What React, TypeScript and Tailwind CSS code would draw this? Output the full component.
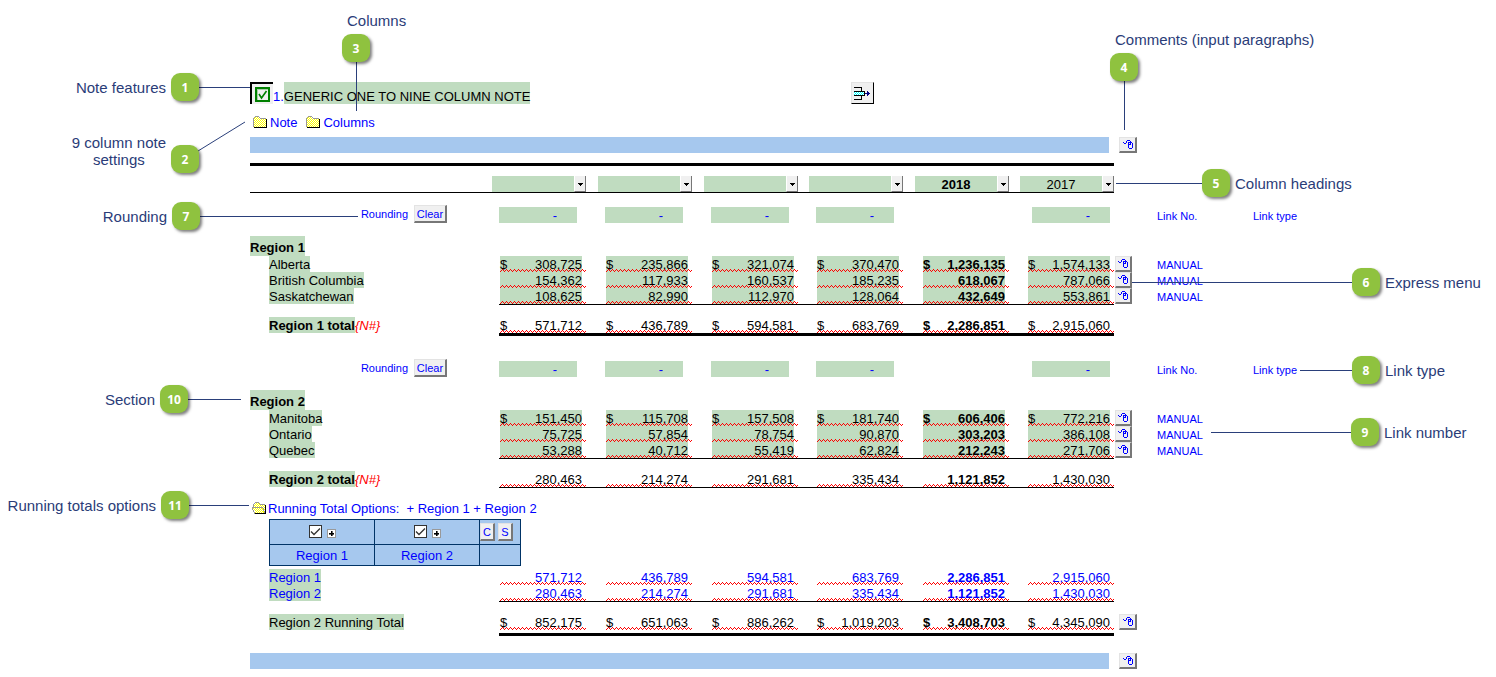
import type { ReactNode } from 'react';

type Amount = { dollar?: boolean; values: string[] };
type Line = { name: string; amounts: Amount };

const COLS = ['w-[106px]', 'w-[106px]', 'w-[105px]', 'w-[106px]', 'w-[105px]', 'w-[87px]'];
const HEADINGS = ['', '', '', '', '2018', '2017'];

const region1: Line[] = [
  { name: 'Alberta', amounts: { dollar: true, values: ['308,725', '235,866', '321,074', '370,470', '1,236,135', '1,574,133'] } },
  { name: 'British Columbia', amounts: { values: ['154,362', '117,933', '160,537', '185,235', '618,067', '787,066'] } },
  { name: 'Saskatchewan', amounts: { values: ['108,625', '82,990', '112,970', '128,064', '432,649', '553,861'] } },
];
const region2: Line[] = [
  { name: 'Manitoba', amounts: { dollar: true, values: ['151,450', '115,708', '157,508', '181,740', '606,406', '772,216'] } },
  { name: 'Ontario', amounts: { values: ['75,725', '57,854', '78,754', '90,870', '303,203', '386,108'] } },
  { name: 'Quebec', amounts: { values: ['53,288', '40,712', '55,419', '62,824', '212,243', '271,706'] } },
];
const total1 = ['571,712', '436,789', '594,581', '683,769', '2,286,851', '2,915,060'];
const total2 = ['280,463', '214,274', '291,681', '335,434', '1,121,852', '1,430,030'];
const running = ['852,175', '651,063', '886,262', '1,019,203', '3,408,703', '4,345,090'];

function Patterns() {
  return (
    <svg className="absolute size-0" aria-hidden="true">
      <defs>
        <pattern id="squiggle" width="4" height="3" patternUnits="userSpaceOnUse">
          <path d="M0 2h1v1H0zM1 1h1v1H1zM2 0h1v1H2zM3 1h1v1H3z" fill="#f00" />
        </pattern>
        <pattern id="dither" width="2" height="2" patternUnits="userSpaceOnUse">
          <path d="M0 0h2v2H0z" fill="#fff" />
          <path d="M1 0h1v1H1zM0 1h1v1H0z" fill="#ff0" />
        </pattern>
        <pattern id="cyan" width="2" height="2" patternUnits="userSpaceOnUse">
          <path d="M0 0h2v2H0z" fill="#fff" />
          <path d="M1 0h1v1H1zM0 1h1v1H0z" fill="#0ff" />
        </pattern>
      </defs>
    </svg>
  );
}

function Folder() {
  return (
    <svg width="15" height="13" viewBox="0 0 15 13" shapeRendering="crispEdges" aria-hidden="true">
      <path d="M1 2h1V1h5v1h1v1h5v8H1z" fill="url(#dither)" />
      <path d="M0 2h1v9H0zM1 1h1v1H1zM2 0h4v1H2zM6 1h1v1H6zM7 2h6v1H7z" fill="#999" />
      <path d="M1 11h12V3h1v9H1z" fill="#000" />
    </svg>
  );
}

function OpenFolder() {
  return (
    <svg width="15" height="13" viewBox="0 0 15 13" shapeRendering="crispEdges" aria-hidden="true">
      <path d="M2 2h1V1h4v1h1v1h5v8H4z" fill="url(#dither)" />
      <path d="M0 5h11v1h1v3h1v3H3V9H2V7H0z" fill="url(#dither)" />
      <path d="M10 6h1v2h1v2h-1V8h-1z" fill="#ff0" />
      <path d="M1 2h1v3H1zM2 1h1v1H2zM3 0h4v1H3zM7 1h1v1H7zM8 2h5v1H8zM0 5h11v1H0zM0 6h1v2H0zM1 8h1v2H1zM2 10h1v2H2zM11 6h1v3h-1zM12 9h1v2h-1z" fill="#999" />
      <path d="M3 11h10V3h1v9H3z" fill="#000" />
    </svg>
  );
}

function MouseIcon() {
  return (
    <svg width="10" height="9" viewBox="0 0 10 9" shapeRendering="crispEdges" aria-hidden="true">
      <path
        d="M4 0h3v1H4zM3 1h1v1H3zM7 1h1v1H7zM0 2h1v1H0zM3 2h1v1H3zM5 2h4v1H5zM1 3h2v1H1zM5 3h1v5H5zM7 3h1v2H7zM9 3h1v5H9zM6 4h1v1H6zM6 8h3v1H6z"
        fill="#00f"
      />
    </svg>
  );
}

function MouseButton({ label, width = 'w-[17px]' }: { label: string; width?: string }) {
  return (
    <button
      type="button"
      aria-label={label}
      className={`flex h-4 items-center justify-center border-t border-l border-r-2 border-b-2 border-t-[#e3e3e3] border-l-[#e3e3e3] border-r-[#777] border-b-[#777] bg-[#f0f0f0] ${width}`}
    >
      <MouseIcon />
    </button>
  );
}

function SmallButton({ children, className }: { children: ReactNode; className: string }) {
  return (
    <button
      type="button"
      className={`flex h-[18px] items-center justify-center border-t border-l border-r-2 border-b-2 border-t-[#e3e3e3] border-l-[#e3e3e3] border-r-[#777] border-b-[#777] bg-[#f0f0f0] text-[11px] leading-4 text-[#00f] ${className}`}
    >
      {children}
    </button>
  );
}

function Bar() {
  return (
    <div className="flex gap-[10px]">
      <div className="h-4 w-[859px] bg-[#a6c8ee]" />
      <MouseButton label="Comment menu" width="w-[18px]" />
    </div>
  );
}

function Field({ value, green, dollar }: { value: string; green?: boolean; dollar?: boolean }) {
  return (
    <div className="relative ml-px h-4 w-[86px]">
      <div className={`flex h-4 w-[82px] justify-between ${green ? 'bg-[#c0dcc0]' : ''}`}>
        <span>{dollar ? '$' : ''}</span>
        <span>{value}</span>
      </div>
      <svg className="absolute bottom-0 left-0 h-[3px] w-full" shapeRendering="crispEdges" aria-hidden="true">
        <rect width="100%" height="100%" fill="url(#squiggle)" />
      </svg>
    </div>
  );
}

function AmountCells({ amounts, green, rule = '' }: { amounts: Amount; green?: boolean; rule?: string }) {
  return (
    <>
      {amounts.values.map((v, i) => (
        <td key={i} className={`border-black p-0 ${rule} ${i === 4 ? 'font-bold' : ''}`}>
          <Field value={v} green={green} dollar={amounts.dollar} />
        </td>
      ))}
    </>
  );
}

function Columns() {
  return (
    <colgroup>
      <col className="w-[249px]" />
      {COLS.map((c, i) => (
        <col key={i} className={c} />
      ))}
      <col className="w-[43px]" />
      <col className="w-[96px]" />
    </colgroup>
  );
}

const tableClass = 'w-[1003px] table-fixed border-separate border-spacing-0 text-[13px] leading-[18px]';

function RoundingRow() {
  return (
    <div className="flex h-[18px] items-end text-[11px] leading-[14px] text-[#00f]">
      <div className="flex w-[249px] items-center justify-end gap-[6px] pr-[52px]">
        <span>Rounding</span>
        <SmallButton className="w-[33px]">Clear</SmallButton>
      </div>
      {COLS.map((c, i) => (
        <div key={i} className={`${c} ${i === 5 ? 'pl-[5px]' : ''}`}>
          {i !== 4 && (
            <input
              aria-label={`Rounding column ${i + 1}`}
              defaultValue="-"
              className="block h-4 w-[78px] bg-[#c0dcc0] pt-px pr-5 text-right text-[13px] leading-4 text-[#00f] outline-none"
            />
          )}
        </div>
      ))}
      <span className="ml-[43px] w-[96px]">Link No.</span>
      <span>Link type</span>
    </div>
  );
}

type RegionProps = { name: string; lines: Line[]; total: string[]; dollar?: boolean; totalRule: string };

function Region({ name, lines, total, dollar, totalRule }: RegionProps) {
  return (
    <table className={tableClass}>
      <Columns />
      <tbody>
        <tr>
          <th className="p-0 text-left align-top" colSpan={9}>
            <span className="block h-5 w-fit bg-[#c0dcc0] pt-[3px]">{name}</span>
          </th>
        </tr>
        {lines.map((l, i) => (
          <tr key={l.name}>
            <td className="p-0 pl-[19px] align-top">
              <span className="block h-4 w-fit bg-[#c0dcc0]">{l.name}</span>
            </td>
            <AmountCells amounts={l.amounts} green rule={i === lines.length - 1 ? 'border-b' : ''} />
            <td className="p-0 pl-px align-top">
              <MouseButton label={`${l.name} menu`} />
            </td>
            <td className="p-0 align-top text-[11px] text-[#00f]">
              <span className="block h-4">MANUAL</span>
            </td>
          </tr>
        ))}
        <tr>
          <td className="h-3 p-0" colSpan={9} />
        </tr>
        <tr>
          <td className="p-0 pl-[19px] align-top">
            <div className="flex h-4">
              <span className="bg-[#c0dcc0] font-bold">{name} total</span>
              <span className="text-[#f00] italic">{'{N#}'}</span>
            </div>
          </td>
          <AmountCells amounts={{ dollar, values: total }} rule={totalRule} />
        </tr>
      </tbody>
    </table>
  );
}

function OptionCheck({ name }: { name: string }) {
  return (
    <div className="flex items-end justify-center gap-[5px]">
      <span className="relative size-[13px]">
        <input
          type="checkbox"
          defaultChecked
          aria-label={`Include ${name}`}
          className="block size-[13px] appearance-none border border-[#333] bg-white"
        />
        <svg className="pointer-events-none absolute inset-0" width="13" height="13" viewBox="0 0 13 13" aria-hidden="true">
          <path d="M2 6.500l3 3 6-6" fill="none" stroke="#333" strokeWidth="1.300" />
        </svg>
      </span>
      <button type="button" aria-label={`Expand ${name}`} className="flex size-[9px] items-center justify-center border border-[#999] bg-white">
        <svg width="5" height="5" viewBox="0 0 5 5" shapeRendering="crispEdges" aria-hidden="true">
          <path d="M0 2h5v1H0zM2 0h1v5H2z" fill="#000" stroke="#000" strokeWidth=".6" />
        </svg>
      </button>
    </div>
  );
}

function OptionsTable() {
  const cell = 'border border-[#003366] p-0 text-center';
  return (
    <table className="ml-[19px] w-[252px] table-fixed border-collapse bg-[#a6c8ee] text-[13px] leading-4 text-[#00f]">
      <colgroup>
        <col className="w-[105px]" />
        <col className="w-[105px]" />
        <col className="w-[41px]" />
      </colgroup>
      <tbody>
        <tr className="h-[25px]">
          <td className={`${cell} pb-[2px]`}><OptionCheck name="Region 1" /></td>
          <td className={`${cell} pb-[2px]`}><OptionCheck name="Region 2" /></td>
          <td className={cell}>
            <div className="flex gap-[3px]">
              <SmallButton className="w-[15px]">C</SmallButton>
              <SmallButton className="w-[15px]">S</SmallButton>
            </div>
          </td>
        </tr>
        <tr className="h-[21px]">
          <td className={`${cell} pt-[2px]`}>Region 1</td>
          <td className={`${cell} pt-[2px]`}>Region 2</td>
          <td className={cell} />
        </tr>
      </tbody>
    </table>
  );
}

function RunningTable() {
  const rows = [
    { name: 'Region 1', values: total1, rule: '' },
    { name: 'Region 2', values: total2, rule: 'border-b' },
  ];
  return (
    <table className={tableClass}>
      <Columns />
      <tbody>
        {rows.map((r) => (
          <tr key={r.name} className="text-[#00f]">
            <td className="p-0 pl-[19px] align-top">
              <span className="block h-4 w-fit bg-[#c0dcc0]">{r.name}</span>
            </td>
            <AmountCells amounts={{ values: r.values }} rule={r.rule} />
          </tr>
        ))}
        <tr>
          <td className="h-3 p-0" colSpan={9} />
        </tr>
        <tr>
          <td className="p-0 pl-[19px] align-top">
            <span className="block h-4 w-fit bg-[#c0dcc0]">Region 2 Running Total</span>
          </td>
          <AmountCells amounts={{ dollar: true, values: running }} rule="border-b-3 pb-[3px]" />
          <td className="p-0 pl-[5px] align-top">
            <MouseButton label="Running total menu" width="w-[18px]" />
          </td>
        </tr>
      </tbody>
    </table>
  );
}

function Sheet() {
  return (
    <main className="pt-[82px] pl-[250px]">
      <div className="flex h-[22px] text-[13px] leading-4">
        <button type="button" aria-label="Note features" className="flex h-[22px] w-[23px] items-center justify-center border-t-2 border-l-2 border-t-black border-l-black bg-[#f0f0f0]">
          <svg width="15" height="15" viewBox="0 0 15 15" aria-hidden="true">
            <path d="M0 0h15v15H0zM2 2v11h11V2z" fill="#008000" fillRule="evenodd" />
            <path d="M2 2h11v1H3v10H2z" fill="#a8d0a8" />
            <path d="M4 7l2.500 4L11.500 4" fill="none" stroke="#008000" strokeWidth="1.600" />
          </svg>
        </button>
        <span className="pt-[7px] text-[#00f]">1.</span>
        <h1 className="bg-[#c0dcc0] pt-[7px]">GENERIC ONE TO NINE COLUMN NOTE</h1>
        <button type="button" aria-label="Insert column" className="mr-[622px] ml-auto flex h-[22px] w-[23px] items-center justify-center border-t border-l border-r border-b border-t-[#e3e3e3] border-l-[#e3e3e3] border-r-black border-b-black bg-[#f0f0f0]">
          <svg width="17" height="13" viewBox="0 0 17 13" shapeRendering="crispEdges" aria-hidden="true">
            <path d="M0 5h10v3H0z" fill="url(#cyan)" />
            <path d="M0 0h8v1H0zM7 1h1v3H7zM0 4h11v1H0zM10 5h1v3h-1zM0 8h11v1H0zM7 9h1v3H7zM0 12h8v1H0z" fill="#000" />
            <path d="M11 6h2V4h1v1h1v1h1v1h-1v1h-1v1h-1V7h-2z" fill="#000080" />
          </svg>
        </button>
      </div>
      <nav className="mt-[10px] flex h-4 gap-[9px] pl-[3px] text-[13px] leading-4 text-[#00f]">
        <a href="#note" className="flex items-center gap-[2px]"><Folder /><span className="pt-[2px]">Note</span></a>
        <a href="#columns" className="flex items-center gap-[2px]"><Folder /><span className="pt-[2px]">Columns</span></a>
      </nav>
      <div className="mt-[7px]"><Bar /></div>
      <div className="mt-[10px] h-[3px] w-[864px] bg-black" />
      <div className="mt-[10px] flex w-[864px] border-b border-black pl-[242px] text-[13px]">
        {HEADINGS.map((h, i) => (
          <div key={i} className={i === 5 ? 'w-[94px]' : COLS[i]}>
            <div className="relative h-4 w-[94px]">
              <select
                aria-label={`Column ${i + 1} heading`}
                className={`block h-4 w-[94px] appearance-none bg-[#c0dcc0] pt-px pr-3 text-center leading-4 [text-align-last:center] ${i === 4 ? 'font-bold' : ''}`}
              >
                <option>{h}</option>
              </select>
              <span className="pointer-events-none absolute top-0 right-0 flex h-4 w-[12px] items-center justify-center border-r border-b border-l border-r-[#777] border-b-[#777] border-l-white bg-[#f0f0f0] pt-px">
                <svg width="5" height="3" viewBox="0 0 5 3" shapeRendering="crispEdges" aria-hidden="true">
                  <path d="M0 0h5v1H4v1H3v1H2V2H1V1H0z" fill="#000" />
                </svg>
              </span>
            </div>
          </div>
        ))}
      </div>
      <div className="mt-3"><RoundingRow /></div>
      <div className="mt-[13px]">
        <Region name="Region 1" lines={region1} total={total1} dollar totalRule="border-b-3" />
      </div>
      <div className="mt-[23px]"><RoundingRow /></div>
      <div className="mt-[13px]">
        <Region name="Region 2" lines={region2} total={total2} totalRule="border-b" />
      </div>
      <div className="mt-3 flex h-4 items-center gap-px pl-[2px] text-[13px] leading-4 text-[#00f]">
        <OpenFolder />
        <span className="pt-[2px] whitespace-pre">Running Total Options:  + Region 1 + Region 2</span>
      </div>
      <div className="mt-[3px]"><OptionsTable /></div>
      <div className="mt-[3px]"><RunningTable /></div>
      <div className="mt-[17px] pb-2"><Bar /></div>
    </main>
  );
}

function Badge({ n }: { n: number }) {
  return (
    <span className="flex size-7 shrink-0 items-center justify-center rounded-[9px] bg-[#8fc23f] pt-[2px] font-['Open_Sans',sans-serif] text-[12px] leading-4 font-bold text-white shadow-[2px_2px_3px_rgba(0,0,0,0.5)]">
      {n}
    </span>
  );
}

function LeftCallout({ n, className, children }: { n: number; className: string; children: ReactNode }) {
  return (
    <div className={`absolute left-0 flex justify-end gap-[5px] ${className}`}>
      <span className="text-center">{children}</span>
      <Badge n={n} />
    </div>
  );
}

function RightCallout({ n, className, children }: { n: number; className: string; children: ReactNode }) {
  return (
    <div className={`absolute flex items-center gap-[5px] whitespace-nowrap ${className}`}>
      <Badge n={n} />
      <span>{children}</span>
    </div>
  );
}

function TopCallout({ n, className, children }: { n: number; className: string; children: ReactNode }) {
  return (
    <div className={`absolute flex flex-col gap-[5px] whitespace-nowrap ${className}`}>
      <span className="pl-[5px]">{children}</span>
      <Badge n={n} />
    </div>
  );
}

function Callouts() {
  return (
    <aside className="pointer-events-none absolute inset-0 text-[15px] leading-[17px] text-[#2a3c78]">
      <svg className="absolute top-0 left-0" width="1496" height="677" aria-hidden="true">
        <path
          d="M199 87.500H250M356.500 62V111M1124.500 81V130M1116 183.500H1202M1132 282.500H1352M200 216.500H358M1300 370.500H1352M1211 432.500H1351M188 399.500H241M189 505.500H249M198 151L245 122"
          stroke="#2a3f7a"
          fill="none"
        />
      </svg>
      <LeftCallout n={1} className="top-[73px] w-[199px] items-center">Note features</LeftCallout>
      <LeftCallout n={2} className="top-[144px] w-[199px] items-end">
        <span className="-mt-[10px] block pb-[5px]">9 column note<br />settings</span>
      </LeftCallout>
      <TopCallout n={3} className="top-3 left-[342px]">Columns</TopCallout>
      <TopCallout n={4} className="top-[31px] left-[1110px]">Comments (input paragraphs)</TopCallout>
      <RightCallout n={5} className="top-[169px] left-[1202px]">Column headings</RightCallout>
      <RightCallout n={6} className="top-[268px] left-[1352px]">Express menu</RightCallout>
      <LeftCallout n={7} className="top-[202px] w-[200px] items-center">Rounding</LeftCallout>
      <RightCallout n={8} className="top-[356px] left-[1352px]">Link type</RightCallout>
      <RightCallout n={9} className="top-[418px] left-[1351px]">Link number</RightCallout>
      <LeftCallout n={10} className="top-[385px] w-[188px] items-center">Section</LeftCallout>
      <LeftCallout n={11} className="top-[491px] w-[189px] items-center">Running totals options</LeftCallout>
    </aside>
  );
}

export default function App() {
  return (
    <div className="relative bg-white font-['Liberation_Sans',Arial,sans-serif] text-black">
      <Patterns />
      <Sheet />
      <Callouts />
    </div>
  );
}
